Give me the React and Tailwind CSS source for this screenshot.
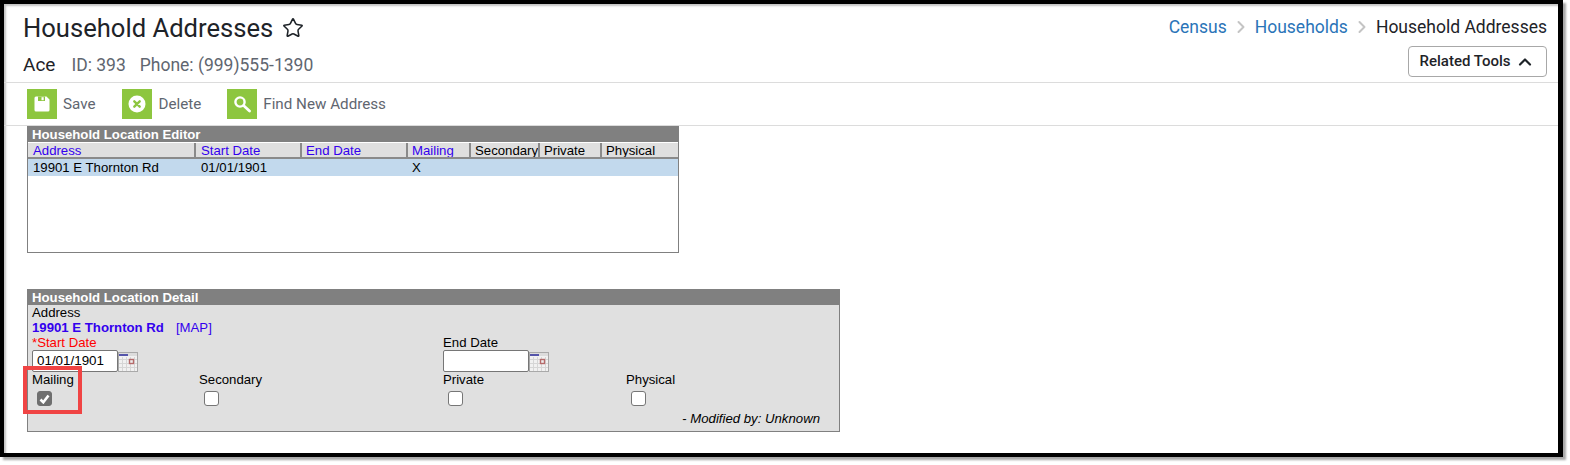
import React from "react";
import { Star, ChevronRight, ChevronUp } from "lucide-react";

const COLUMNS = [
  { label: "Address", w: "w-[168px] pl-[5px]", link: true },
  { label: "Start Date", w: "w-[106px] pl-[5px]", link: true },
  { label: "End Date", w: "w-[106px] pl-[4px]", link: true },
  { label: "Mailing", w: "w-[63px] pl-[4px]", link: true },
  { label: "Secondary", w: "w-[69px] pl-[4px]", link: false },
  { label: "Private", w: "w-[62px] pl-[4px]", link: false },
  { label: "Physical", w: "w-[76px] pl-[4px]", link: false },
];

const ROW = ["19901 E Thornton Rd", "01/01/1901", "", "X", "", "", ""];

function SaveIcon() {
  return (
    <svg width="16" height="16" viewBox="0 0 16 16">
      <path d="M2 0.5h10.5l3 3V14a1.5 1.5 0 0 1-1.5 1.5H2A1.5 1.5 0 0 1 .5 14V2A1.5 1.5 0 0 1 2 .5z" fill="#fff" />
      <rect x="4" y="0.5" width="7" height="4.5" fill="#8dc63f" />
      <rect x="7.5" y="1.2" width="2.2" height="3" fill="#fff" />
    </svg>
  );
}

function DeleteIcon() {
  return (
    <svg width="18" height="18" viewBox="0 0 18 18">
      <circle cx="9" cy="9" r="8.5" fill="#fff" />
      <path d="M6.3 6.3l5.4 5.4M11.7 6.3l-5.4 5.4" stroke="#8dc63f" strokeWidth="2.4" strokeLinecap="round" />
    </svg>
  );
}

function SearchIcon() {
  return (
    <svg width="18" height="18" viewBox="0 0 18 18" fill="none">
      <circle cx="7" cy="7" r="4.6" stroke="#fff" strokeWidth="2.4" />
      <path d="M10.8 10.8l5.7 5.2" stroke="#fff" strokeWidth="2.8" strokeLinecap="round" />
    </svg>
  );
}

function CalendarIcon() {
  return (
    <svg width="20" height="20" viewBox="0 0 20 20" className="shrink-0">
      <rect x="0" y="0" width="20" height="20" fill="#a9a9a9" />
      <rect x="1" y="1" width="18" height="18" fill="#f1f1f1" />
      <rect x="1" y="1" width="18" height="3" fill="#dcdcdc" />
      <rect x="1" y="2" width="9" height="2" fill="#5555aa" />
      <path d="M1 7.5h18M1 11.5h18M1 15.5h18M4.5 5v14M8.5 5v14M12.5 5v14M16.5 5v14" stroke="#d6d6d6" strokeWidth="1" />
      <rect x="11.5" y="7.5" width="4" height="4" fill="#eee" stroke="#b56a6a" strokeWidth="1.4" />
    </svg>
  );
}

function ToolButton({ icon, label, className }) {
  return (
    <div className={`flex items-center gap-[6px] ${className}`}>
      <div className="w-[30px] h-[30px] bg-[#8dc63f] flex items-center justify-center">{icon}</div>
      <span className="text-[15.2px] text-[#5f6670]">{label}</span>
    </div>
  );
}

function CheckField({ label, checked, className }) {
  return (
    <div className={className}>
      <div className="h-[14px] leading-[14px]">{label}</div>
      <div
        className={`mt-[4px] ml-[5px] w-[15px] h-[15px] rounded-[3px] border flex items-center justify-center ${
          checked ? "bg-[#6f6f6f] border-[#6f6f6f]" : "bg-white border-[#767676]"
        }`}
      >
        {checked && (
          <svg width="11" height="10" viewBox="0 0 11 10" fill="none">
            <path d="M1.5 5.5l2.8 2.8L9.5 1.5" stroke="#fff" strokeWidth="2.6" />
          </svg>
        )}
      </div>
    </div>
  );
}

function DateField({ label, value, required, className }) {
  return (
    <div className={`pt-[1px] ${className || ""}`}>
      <div className={`h-[14px] leading-[14px] ${required ? "text-[#ff0000]" : ""}`}>
        {required ? "*" : ""}{label}
      </div>
      <div className="flex items-end">
        <div className="w-[86px] h-[22px] bg-white border border-[#767676] rounded-[2px] pl-[4px] leading-[20px] text-[13.4px]">
          {value}
        </div>
        <CalendarIcon />
      </div>
    </div>
  );
}

export default function App() {
  return (
    <div className="w-[1570px] h-[465px] bg-white overflow-hidden">
      <div
        className="relative w-[1563px] h-[457px] border-t-[4px] border-l-[4px] border-r-[5px] border-b-[4px] border-black bg-white shadow-[3px_3px_2px_#a8a8a8,inset_2px_2px_2px_#c4c4c4]"
        style={{ fontFamily: "Roboto, sans-serif" }}
      >
        <div className="h-[79px] border-b border-[#dcdcdc] pl-[19px] pr-[11px] flex justify-between">
          <div>
            <div className="flex items-center mt-[8px] h-[32px]">
              <h1 className="text-[25.6px] leading-[32px] text-[#1e2328]">Household Addresses</h1>
              <Star size={22} strokeWidth={1.7} className="ml-[9px] text-[#1e2328]" />
            </div>
            <div className="flex items-baseline mt-[9px] text-[#5f6670] text-[17.5px] leading-[24px]">
              <span className="text-[#1e2328] text-[19px]">Ace</span>
              <span className="ml-[16px]">ID: 393</span>
              <span className="ml-[14px]">Phone: (999)555-1390</span>
            </div>
          </div>
          <div className="flex flex-col items-end">
            <div className="flex items-center mt-[12px] h-[22px] text-[17.5px]">
              <span className="text-[#2a74b8]">Census</span>
              <ChevronRight size={20} strokeWidth={2.4} className="mx-[4px] text-[#c4c4c4]" />
              <span className="text-[#2a74b8]">Households</span>
              <ChevronRight size={20} strokeWidth={2.4} className="mx-[4px] text-[#c4c4c4]" />
              <span className="text-[#1e2328]">Household Addresses</span>
            </div>
            <div className="mt-[8px] w-[139px] h-[31px] border border-[#a8a8a8] rounded-[4px] flex items-center justify-center text-[15px] font-medium text-[#1e2328]">
              Related Tools
              <ChevronUp size={20} strokeWidth={2.6} className="ml-[5px]" />
            </div>
          </div>
        </div>

        <div className="h-[43px] border-b border-[#dcdcdc] pl-[23px] pt-[6px] flex items-start">
          <ToolButton icon={<SaveIcon />} label="Save" />
          <ToolButton icon={<DeleteIcon />} label="Delete" className="ml-[27px]" />
          <ToolButton icon={<SearchIcon />} label="Find New Address" className="ml-[26px]" />
        </div>

        <div className="pl-[23px] text-[13.2px] text-black" style={{ fontFamily: '"Liberation Sans", Arial, sans-serif' }}>
          <section className="w-[652px] h-[127px] border border-t-0 border-[#808080]">
            <div className="h-[16px] -mx-px bg-[#808080] text-white font-bold leading-[17px] pl-[5px]">
              Household Location Editor
            </div>
            <div className="flex h-[17px] bg-[#dfdfdf] border-t border-b-2 border-t-white border-b-[#8a8a8a]">
              {COLUMNS.map((c) => (
                <div
                  key={c.label}
                  className={`${c.w} leading-[15px] border-r-2 border-r-[#8a8a8a] last:border-r-0 whitespace-nowrap overflow-hidden ${
                    c.link ? "text-[#3300ee]" : ""
                  }`}
                >
                  {c.label}
                </div>
              ))}
            </div>
            <div className="flex h-[17px] bg-[#c2d9ed]">
              {COLUMNS.map((c, i) => (
                <div key={c.label} className={`${c.w} leading-[17px]`}>
                  {ROW[i]}
                </div>
              ))}
            </div>
          </section>

          <section className="mt-[36px] w-[813px] h-[143px] bg-[#e0e0e0] border border-t-0 border-[#808080]">
            <div className="h-[16px] -mx-px bg-[#808080] text-white font-bold leading-[17px] pl-[5px]">
              Household Location Detail
            </div>
            <div className="pl-[4px] pt-[1px]">
              <div className="h-[14px] leading-[14px]">Address</div>
              <div className="h-[15px] leading-[15px] text-[#3300ee]">
                <span className="font-bold">19901 E Thornton Rd</span>
                <span className="ml-[12px]">[MAP]</span>
              </div>
              <div className="flex h-[38px]">
                <DateField label="Start Date" value="01/01/1901" required className="w-[411px]" />
                <DateField label="End Date" />
              </div>
              <div className="flex">
                <CheckField label="Mailing" checked className="w-[167px]" />
                <CheckField label="Secondary" className="w-[244px]" />
                <CheckField label="Private" className="w-[183px]" />
                <CheckField label="Physical" />
              </div>
              <div className="mt-[6px] pr-[19px] text-right leading-[14px]">
                - <span className="italic">Modified by: Unknown</span>
              </div>
            </div>
          </section>
        </div>

        {/* red callout around the Mailing checkbox */}
        <div className="absolute left-[19px] top-[362px] w-[59px] h-[48px] border-[4px] border-[#f04444]" />
      </div>
    </div>
  );
}
